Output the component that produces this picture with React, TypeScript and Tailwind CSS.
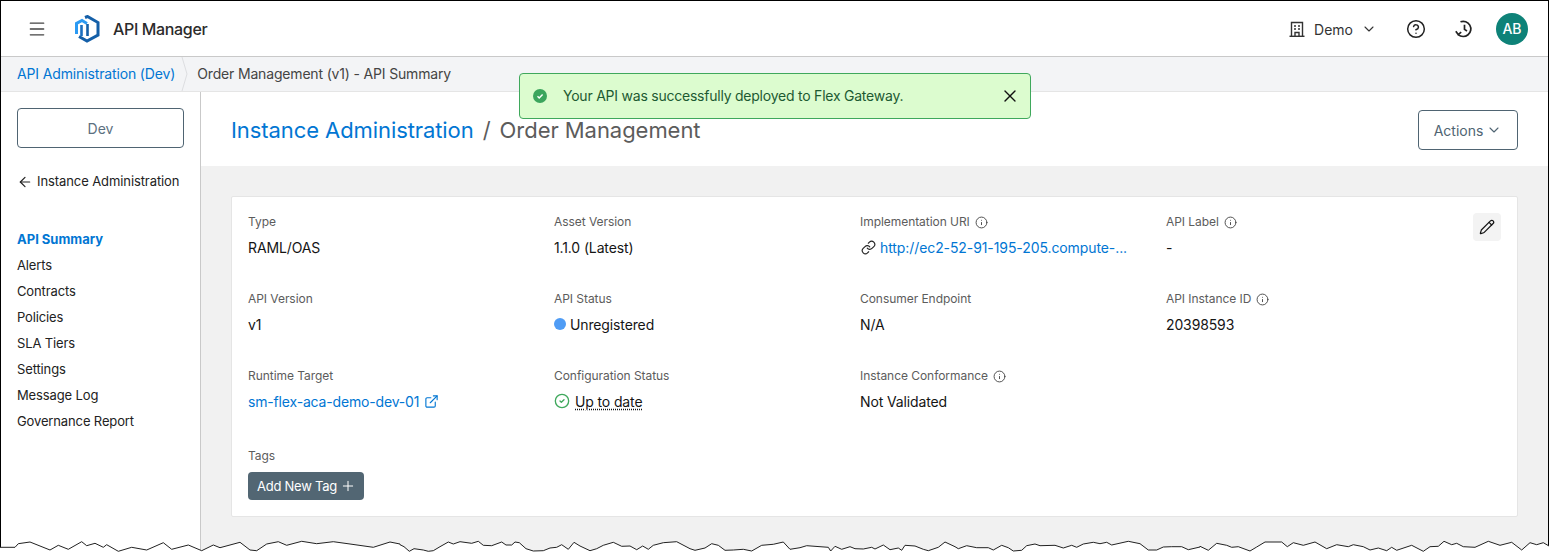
import React from "react";
import { ChevronDown, X, Plus, Pencil, Link, ExternalLink, Info, CircleHelp, ArrowLeft, Menu, CircleCheck } from "lucide-react";

const seg0 = [0,142,45,142,55,131,90,126,150,150,175,136,205,148,245,125,260,137,285,130,310,142,320,134,355,154,395,142,440,150,490,128,515,148,565,135,605,152,640,135,660,143,720,127,750,150,770,152,800,132,835,125,860,136,905,124,950,131,1000,125,1050,132,1120,142,1170,126,1200,132];
const seg1 = [0,38,12,44,28,58,42,50,70,54,85,58,100,56,120,44,145,30,160,36,180,29,215,34,235,28,250,40,275,41,305,30,318,39,335,39,345,30,358,32,378,50,400,57,430,56,450,48,470,46,485,38,505,52,522,31,540,42,570,56,590,50,610,40,640,31,665,43,690,42,710,53,728,42,745,52,760,40,790,32,830,29,870,50,885,55,915,48,935,35,955,40,975,55,1000,54,1030,52,1055,57,1085,40,1120,37,1150,30,1170,52,1200,47];
const seg2 = [0,47,20,41,60,44,85,46,92,57,105,43,125,52,150,44,165,50,190,51,215,46,225,51,250,39,270,53,295,48,305,55,315,40,345,42,370,52,385,56,415,46,435,30,465,44,475,50,500,41,530,47,565,47,580,54,605,40,625,47,640,57,665,55,680,41,705,36,720,41,765,40,790,48,815,40,830,46,850,36,880,31,900,35,920,31,935,39,985,28,1020,35,1045,54,1070,54,1090,45,1115,44,1145,44,1165,53,1200,45];
const seg3 = [0,43,25,55,50,34,80,40,95,46,115,44,150,57,170,45,195,30,245,30,262,44,280,32,310,40,345,30,380,50,410,38,445,44,460,38,490,44,510,54,535,48,560,56,575,46,590,55,635,40,670,58,690,44,715,43,732,28,755,38,770,34,790,44,825,46,865,28,900,40,935,31,965,54,990,32,1010,38,1030,32,1047,42];

function edge() {
  const pts: string[] = [];
  const add = (s: number[], x0: number, y0: number) => {
    for (let i = 0; i < s.length; i += 2) {
      pts.push(`${(x0 + s[i] / 3).toFixed(1)},${(y0 + s[i + 1] / 3).toFixed(1)}`);
    }
  };
  add(seg0, 0, 500);
  add(seg1, 400, 532);
  add(seg2, 800, 532);
  add(seg3, 1200, 532);
  return pts;
}

const Label = ({ children, info }: { children: React.ReactNode; info?: boolean }) => (
  <div className="flex items-center gap-[5px] h-[18px] text-[12px] tracking-[-0.05px] text-[#5c5c5c]">
    {children}
    {info && <Info className="w-[13px] h-[13px] text-[#444]" strokeWidth={1.7} />}
  </div>
);

const Field = ({ label, info, children }: { label: string; info?: boolean; children: React.ReactNode }) => (
  <div className="h-[77px]">
    <Label info={info}>{label}</Label>
    <div className="mt-[7px] h-[18px] flex items-center text-[14px] tracking-[-0.13px] text-[#151515]">{children}</div>
  </div>
);

export default function App() {
  const pts = edge();
  const nav = ["Alerts", "Contracts", "Policies", "SLA Tiers", "Settings", "Message Log", "Governance Report"];
  return (
    <div className="relative h-[552px] w-full overflow-hidden bg-white font-['Inter','Liberation_Sans',sans-serif] text-[#151515]">
      <div className="relative h-[552px] border-x border-t border-black">
        <header className="h-[56px] flex items-center border-b border-[#c9c9c9] bg-white">
          <Menu className="ml-[26px] w-5 h-5 text-[#444]" strokeWidth={1.6} />
          <svg className="ml-[27px]" width="26" height="28" viewBox="0 0 26 28" fill="none">
            <path d="M11 2.5 L13.5 1.5 L24 7.5 V20 L13 26 L5 21.5" stroke="#145fa8" strokeWidth="3" />
            <path d="M2.5 19 V8.5 L8 5.5 L13 8.5" stroke="#2b9af3" strokeWidth="3" />
            <path d="M7.5 10 V21" stroke="#1b6fc0" strokeWidth="2.6" />
            <path d="M13.5 9 V21" stroke="#145fa8" strokeWidth="2.6" />
          </svg>
          <span className="ml-[13px] text-[16px] font-medium tracking-[-0.35px] text-[#2b2b2b]">API Manager</span>
          <div className="ml-auto flex items-center">
            <svg width="18" height="18" viewBox="0 0 18 18" fill="none" stroke="#333" strokeWidth="1.4">
              <path d="M3.5 16 V2.5 H14.5 V16" />
              <path d="M1.5 16.3 H16.5" />
              <path d="M6 6 H8 M10 6 H12 M6 9 H8 M10 9 H12 M7 16 V12.5 H11 V16" />
            </svg>
            <span className="ml-[8px] mt-[1px] text-[14px] text-[#333]">Demo</span>
            <ChevronDown className="ml-[8px] w-4 h-4 text-[#333]" strokeWidth={1.6} />
            <CircleHelp className="ml-[29px] w-5 h-5 text-[#222]" strokeWidth={1.8} />
            <svg className="ml-[28px]" width="20" height="20" viewBox="0 0 20 20" fill="none" stroke="#222" strokeWidth="1.7">
              <path d="M6.5 2.8 A7.6 7.6 0 1 1 4.2 15.6" />
              <path d="M1.8 12.3 L4.2 15.6 L7.2 13.2" />
              <path d="M10.5 5.8 V10.4 L13 12" />
            </svg>
            <div className="ml-[22px] mr-[20px] w-8 h-8 rounded-full bg-[#0e8278] flex items-center justify-center text-white text-[14px] font-medium">AB</div>
          </div>
        </header>

        <div className="h-[35px] flex items-center bg-[#f3f4f6] border-b border-[#e5e5e5] text-[14px] tracking-[-0.14px]">
          <a className="ml-[16px] -mt-[2px] text-[#0176d3]">API Administration (Dev)</a>
          <svg className="ml-[6px]" width="8" height="34" viewBox="0 0 8 34" fill="none">
            <path d="M1 0 L6 17 L1 34" stroke="#dcdde0" />
          </svg>
          <span className="ml-[8px] -mt-[2px] tracking-[-0.17px] text-[#444]">Order Management (v1) - API Summary</span>
        </div>

        <div className="flex h-[460px]">
          <aside className="w-[200px] shrink-0 border-r border-[#c9c9c9] pl-[16px] pt-[16px]">
            <div className="w-[167px] h-[40px] rounded-[4px] border border-[#4f6472] flex items-center justify-center text-[14px] text-[#5c7080]">Dev</div>
            <div className="mt-[25px] flex items-center h-[18px] text-[13px] tracking-[-0.09px] text-[#222]">
              <ArrowLeft className="w-4 h-4" strokeWidth={1.8} />
              <span className="ml-[4px]">Instance Administration</span>
            </div>
            <div className="mt-[36px] text-[13px] tracking-[-0.13px]">
              <div className="h-[26px] flex items-center font-bold tracking-[0px] text-[#0176d3]">API Summary</div>
              {nav.map((n) => (
                <div key={n} className="h-[26px] flex items-center text-[#222]">{n}</div>
              ))}
            </div>
          </aside>
          <main className="flex-1 min-w-0 bg-[#f1f1f1]">
            <div className="h-[74px] bg-white flex items-center pl-[30px] pr-[30px]">
              <span className="mt-[2px] text-[22px] tracking-[-0.08px] text-[#0176d3]">Instance Administration</span>
              <span className="mt-[2px] ml-[9px] text-[22px] text-[#5c5c5c]">/</span>
              <span className="mt-[2px] ml-[9px] text-[22px] tracking-[-0.05px] text-[#5c5c5c]">Order Management</span>
              <div className="ml-auto mt-[2px] w-[100px] h-[40px] rounded-[4px] border border-[#4f6472] flex items-center justify-center gap-[3px] text-[14px] text-[#4f6472]">
                Actions <ChevronDown className="w-4 h-4" strokeWidth={1.6} />
              </div>
            </div>
            <div className="relative mt-[30px] ml-[30px] w-[1287px] h-[321px] bg-white border border-[#e5e5e5] rounded-[2px] px-[16px] pt-[16px]">
              <div className="grid grid-cols-[306px_306px_306px_306px]">
                <Field label="Type">RAML/OAS</Field>
                <Field label="Asset Version">1.1.0 (Latest)</Field>
                <Field label="Implementation URI" info>
                  <Link className="ml-[1px] w-[15px] h-[15px] text-[#222]" strokeWidth={1.8} />
                  <span className="ml-[4px] tracking-[-0.09px] text-[#0176d3]">http://ec2-52-91-195-205.compute-...</span>
                </Field>
                <Field label="API Label" info>-</Field>
                <Field label="API Version">v1</Field>
                <Field label="API Status">
                  <span className="w-3 h-3 rounded-full bg-[#4f9cf5]" />
                  <span className="ml-[4px]">Unregistered</span>
                </Field>
                <Field label="Consumer Endpoint">N/A</Field>
                <Field label="API Instance ID" info>20398593</Field>
                <Field label="Runtime Target">
                  <span className="tracking-[-0.17px] text-[#0176d3]">sm-flex-aca-demo-dev-01</span>
                  <ExternalLink className="ml-[5px] w-[15px] h-[15px] text-[#0176d3]" strokeWidth={1.8} />
                </Field>
                <Field label="Configuration Status">
                  <CircleCheck className="w-[16px] h-[16px] text-[#3fa85c]" strokeWidth={2} />
                  <span className="ml-[5px] underline decoration-dotted underline-offset-2">Up to date</span>
                </Field>
                <Field label="Instance Conformance" info>Not Validated</Field>
              </div>
              <div className="mt-[3px]"><Label>Tags</Label></div>
              <div className="mt-[7px] w-[116px] h-[28px] rounded-[4px] bg-[#526673] text-white text-[13px] tracking-[-0.25px] flex items-center pl-[9px] gap-[3px]">
                <span className="mt-[1px]">Add New Tag</span> <Plus className="w-4 h-4" strokeWidth={1.5} />
              </div>
              <div className="absolute right-[16px] top-[16px] w-7 h-7 rounded-[4px] bg-[#f3f3f3] flex items-center justify-center">
                <Pencil className="w-4 h-4 text-[#151515]" strokeWidth={1.8} />
              </div>
            </div>
          </main>
        </div>

        <div className="absolute left-[518px] top-[72px] w-[512px] h-[46px] rounded-[4px] border border-[#3fa85c] bg-[#dcfccf] flex items-center">
          <svg className="ml-[13px]" width="14" height="14" viewBox="0 0 14 14">
            <circle cx="7" cy="7" r="7" fill="#3ba55d" />
            <path d="M4.5 7.3 L6.2 9 L9.6 5.4" stroke="#fff" strokeWidth="1.4" fill="none" />
          </svg>
          <span className="ml-[16px] -mt-[1px] text-[14px] tracking-[-0.23px] text-[#1c5a32]">Your API was successfully deployed to Flex Gateway.</span>
          <X className="ml-auto mr-[10px] w-5 h-5 text-[#111]" strokeWidth={1.6} />
        </div>
      </div>

      <svg className="absolute left-0 top-0 pointer-events-none" width="1549" height="552" viewBox="0 0 1549 552" fill="none">
        <path d={`M${pts.join(" L")} L1549,545 L1549,553 L0,553 Z`} fill="#fff" />
        <path d={`M${pts.join(" L")}`} stroke="#222" strokeWidth="1" />
      </svg>
    </div>
  );
}
